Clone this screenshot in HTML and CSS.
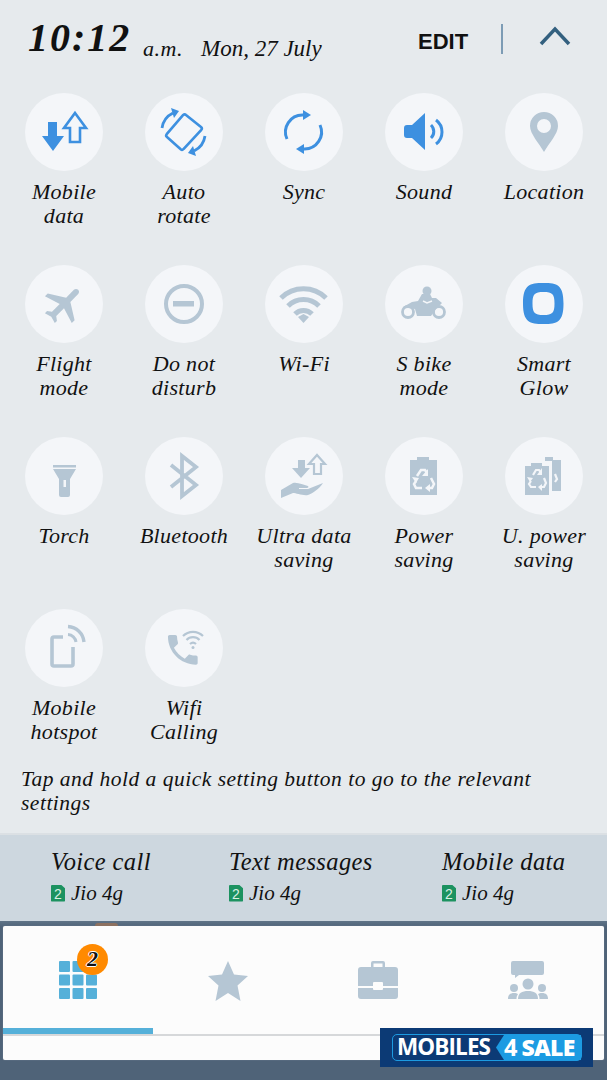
FILE: index.html
```html
<!DOCTYPE html>
<html lang="en">
<head>
    <meta charset="UTF-8">
    <meta name="viewport" content="width=device-width, initial-scale=1.0">
    <title>Quick settings</title>
    <link rel="stylesheet" href="styles.css">
</head>
<body>
    <div class="panel">
        <header class="top">
            <span class="time">10:12</span>
            <span class="ampm">a.m.</span>
            <span class="date">Mon, 27 July</span>
            <span class="edit">EDIT</span>
            <span class="divider"></span>
            <svg class="chevron" width="32" height="20" viewBox="0 0 32 20"><path d="M2 18 16 3l14 15"/></svg>
        </header>

        <div class="tiles">
            <div class="tile">
                <div class="circle"><svg viewBox="0 0 78 78" class="on">
                    <path d="M23 29h9v14h7L28 58 17 43h6z"/>
                    <path d="M50 20 61 35h-6v14H45V35h-6z" class="line-on" stroke-width="2.6"/>
                </svg></div>
                <p>Mobile<br>data</p>
            </div>
            <div class="tile">
                <div class="circle"><svg viewBox="0 0 78 78" class="on">
                    <path d="M41 22 56 34a2 2 0 0 1 .3 2.8L38.500 56a2 2 0 0 1-2.800.3L22 44a2 2 0 0 1-.3-2.800L38.200 22a2 2 0 0 1 2.800 0z" class="line-on" stroke-width="2.6"/>
                    <path d="M17 35A20 20 0 0 1 28 20" class="line-on" stroke-width="2.800"/>
                    <path d="m26 15 8 3-5 7z"/>
                    <path d="M60 43A20 20 0 0 1 49 58" class="line-on" stroke-width="2.800"/>
                    <path d="m51 63-8-3 5-7z"/>
                </svg></div>
                <p>Auto<br>rotate</p>
            </div>
            <div class="tile">
                <div class="circle"><svg viewBox="0 0 78 78" class="on">
                    <path d="M22 46A17 17 0 0 1 38 22" class="line-on" stroke-width="3"/>
                    <path d="M38 17v10l8-5z"/>
                    <path d="M55 32A17 17 0 0 1 39 56" class="line-on" stroke-width="3"/>
                    <path d="M39 61V51l-8 5z"/>
                </svg></div>
                <p>Sync</p>
            </div>
            <div class="tile">
                <div class="circle"><svg viewBox="0 0 78 78" class="on">
                    <path d="M22 32h5l13-12v37L27 45h-5a3 3 0 0 1-3-3v-7a3 3 0 0 1 3-3z"/>
                    <path d="M46 32a9 9 0 0 1 0 13" class="line-on" stroke-width="3"/>
                    <path d="M51 27a15 15 0 0 1 0 24" class="line-on" stroke-width="3"/>
                </svg></div>
                <p>Sound</p>
            </div>
            <div class="tile">
                <div class="circle"><svg viewBox="0 0 78 78" class="off">
                    <path fill-rule="evenodd" d="M39 19a14 14 0 0 1 14 14c0 8-9 17-14 26-5-9-14-18-14-26a14 14 0 0 1 14-14zm0 7a7 7 0 1 0 0 14 7 7 0 0 0 0-14z"/>
                </svg></div>
                <p>Location</p>
            </div>

            <div class="tile">
                <div class="circle"><svg viewBox="0 0 78 78" class="off">
                    <path transform="translate(39 39) rotate(45) scale(2) translate(-11.500 -12)" d="M21 16v-2l-8-5V3.500c0-.83-.67-1.500-1.500-1.500S10 2.670 10 3.500V9l-8 5v2l8-2.500V19l-2 1.500V22l3.500-1 3.500 1v-1.500L13 19v-5.500l8 2.500z"/>
                </svg></div>
                <p>Flight<br>mode</p>
            </div>
            <div class="tile">
                <div class="circle"><svg viewBox="0 0 78 78" class="off">
                    <circle cx="39" cy="39" r="18" class="line-off" stroke-width="4"/>
                    <rect x="28" y="36" width="21" height="5.500"/>
                </svg></div>
                <p>Do not<br>disturb</p>
            </div>
            <div class="tile">
                <div class="circle"><svg viewBox="0 0 78 78" class="off">
                    <path d="M16 33a32 32 0 0 1 45 0" class="line-off" stroke-width="5"/>
                    <path d="M23 41a22 22 0 0 1 31 0" class="line-off" stroke-width="5"/>
                    <path d="M30 49a12 12 0 0 1 17 0" class="line-off" stroke-width="5"/>
                    <path d="m33 52 5.500-3 5.500 3-5.500 6z"/>
                </svg></div>
                <p>Wi-Fi</p>
            </div>
            <div class="tile">
                <div class="circle"><svg viewBox="0 0 78 78" class="off">
                    <circle cx="23" cy="47" r="5.500" class="line-off" stroke-width="2.800"/>
                    <circle cx="54" cy="47" r="5.500" class="line-off" stroke-width="2.800"/>
                    <circle cx="42" cy="26" r="4.500"/>
                    <path d="M18 42l9-5 6-1 4-7h8l2 4h4l6 5-6 6-5 7H32l-2-7z"/>
                    <path d="M38 36l4 2 5-2" class="recycle-line"/>
                </svg></div>
                <p>S bike<br>mode</p>
            </div>
            <div class="tile">
                <div class="circle"><svg viewBox="0 0 78 78" class="on">
                    <path fill-rule="evenodd" d="M38.500 18c14 0 20 2 20 20.500s-6 20.500-20 20.500-20.500-2-20.500-20.500S24.500 18 38.500 18zm0 9c-9 0-11 2-11 11.500S29.500 50 38.500 50s11-2 11-11.500S47.500 27 38.500 27z"/>
                </svg></div>
                <p>Smart<br>Glow</p>
            </div>

            <div class="tile">
                <div class="circle"><svg viewBox="0 0 78 78" class="off">
                    <rect x="28" y="28" width="23" height="2.500"/>
                    <path fill-rule="evenodd" d="M28 32h23l-6 10v16a2 2 0 0 1-2 2h-7a2 2 0 0 1-2-2V42zm10.500 11v7h2.500v-7z"/>
                </svg></div>
                <p>Torch</p>
            </div>
            <div class="tile">
                <div class="circle"><svg viewBox="0 0 78 78" class="off">
                    <path d="M26 28l25 20-14 11V19l14 11-25 20" class="line-off" stroke-width="3.800"/>
                </svg></div>
                <p>Bluetooth</p>
            </div>
            <div class="tile">
                <div class="circle"><svg viewBox="0 0 78 78" class="off">
                    <path d="M33 23h7v8h5l-9 10-9-10h6z"/>
                    <path d="m52 18 8 9h-4v10h-7V27h-5z" class="line-off" stroke-width="2.200"/>
                    <path d="M16 53l12-7c5-1 10 2 15 3 1 1 0 2-1 2h-8v1h9l15-6c-4 6-10 10-15 12-5 1-12-2-15-2l-12 5z"/>
                </svg></div>
                <p>Ultra data<br>saving</p>
            </div>
            <div class="tile">
                <div class="circle"><svg viewBox="0 0 78 78" class="off">
                    <path d="M32 20h12v3h8v35H25V23h7z"/>
                    <g class="recycle">
                        <path d="M32 39l4-6h4l2 3"/>
                        <path d="M46 41l3 6-2 4h-5"/>
                        <path d="M37 51h-6l-2-4 2-3"/>
                        <path d="M43 32v7h-6z" class="head"/>
                        <path d="M40 51l5-4v8z" class="head"/>
                        <path d="M27 40l7 1-3 5z" class="head"/>
                    </g>
                </svg></div>
                <p>Power<br>saving</p>
            </div>
            <div class="tile">
                <div class="circle"><svg viewBox="0 0 78 78" class="off">
                    <path d="M40 20h8v3h8v31h-9V24h-7z"/>
                    <path d="M26 26h11v3h7v29H20V29h6z"/>
                    <g class="recycle small">
                        <path d="M28 38l3-5h3l2 3"/>
                        <path d="M39 41l2 5-2 4h-4"/>
                        <path d="M31 50h-5l-2-3 2-3"/>
                        <path d="M37 31v7h-5z" class="head"/>
                        <path d="M33 50l4-3v7z" class="head"/>
                        <path d="M22 40l6 1-3 4z" class="head"/>
                        <path d="M50 37l2 5-2 3"/>
                    </g>
                </svg></div>
                <p>U. power<br>saving</p>
            </div>

            <div class="tile">
                <div class="circle"><svg viewBox="0 0 78 78" class="off">
                    <path d="M38 28H29a2 2 0 0 0-2 2v25a2 2 0 0 0 2 2h17a2 2 0 0 0 2-2V38" class="line-off" stroke-width="3.600"/>
                    <path d="M43 17.500A17 17 0 0 1 59 33" class="line-off" stroke-width="3.400"/>
                    <path d="M43 25.500A8.500 8.500 0 0 1 51 33" class="line-off" stroke-width="3"/>
                </svg></div>
                <p>Mobile<br>hotspot</p>
            </div>
            <div class="tile">
                <div class="circle"><svg viewBox="0 0 78 78" class="off">
                    <path transform="translate(18 21) scale(1.650)" d="M6.620 10.790c1.440 2.830 3.760 5.140 6.590 6.590l2.200-2.200c.27-.27.67-.36 1.020-.24 1.120.37 2.330.57 3.570.57.550 0 1 .45 1 1V20c0 .55-.45 1-1 1-9.390 0-17-7.610-17-17 0-.55.45-1 1-1h3.500c.55 0 1 .45 1 1 0 1.250.2 2.450.57 3.570.11.35.03.74-.25 1.020l-2.200 2.200z"/>
                    <path d="M38 27a14 14 0 0 1 20 0" class="line-off" stroke-width="2.200"/>
                    <path d="M41.500 31a9 9 0 0 1 13 0" class="line-off" stroke-width="2.200"/>
                    <path d="M45 35a4.500 4.500 0 0 1 6 0" class="line-off" stroke-width="2.200"/>
                    <circle cx="48" cy="38.500" r="1.500"/>
                </svg></div>
                <p>Wifi<br>Calling</p>
            </div>
        </div>

        <p class="hint">Tap and hold a quick setting button to go to the relevant settings</p>
    </div>

    <div class="sims">
        <div class="sim">
            <div class="sim-title">Voice call</div>
            <div class="sim-row"><span class="chip">2</span>Jio 4g</div>
        </div>
        <div class="sim">
            <div class="sim-title">Text messages</div>
            <div class="sim-row"><span class="chip">2</span>Jio 4g</div>
        </div>
        <div class="sim">
            <div class="sim-title">Mobile data</div>
            <div class="sim-row"><span class="chip">2</span>Jio 4g</div>
        </div>
    </div>

    <div class="bottom">
        <span class="peek"></span>
        <div class="card">
            <div class="tabs">
                <div class="tab">
                    <svg width="38" height="38" viewBox="0 0 38 38" class="apps">
                        <rect x="0" y="0" width="11" height="11" rx="1"/><rect x="13.500" y="0" width="11" height="11" rx="1"/><rect x="27" y="0" width="11" height="11" rx="1"/>
                        <rect x="0" y="13.500" width="11" height="11" rx="1"/><rect x="13.500" y="13.500" width="11" height="11" rx="1"/><rect x="27" y="13.500" width="11" height="11" rx="1"/>
                        <rect x="0" y="27" width="11" height="11" rx="1"/><rect x="13.500" y="27" width="11" height="11" rx="1"/><rect x="27" y="27" width="11" height="11" rx="1"/>
                    </svg>
                    <span class="badge">2</span>
                </div>
                <div class="tab">
                    <svg width="40" height="40" viewBox="0 0 40 40" class="off"><path d="M20 0l6 13.500 14 1.500-10.500 9.500 3 15.500L20 32l-12.500 8 3-15.500L0 15l14-1.500z"/></svg>
                </div>
                <div class="tab">
                    <svg width="40" height="38" viewBox="0 0 40 38" class="off">
                        <path d="M13 6V2a2 2 0 0 1 2-2h10a2 2 0 0 1 2 2v4h-2.500V2.500h-9V6z"/>
                        <path d="M3 6h34a3 3 0 0 1 3 3v16H25v-3a1 1 0 0 0-1-1h-8a1 1 0 0 0-1 1v3H0V9a3 3 0 0 1 3-3z"/>
                        <path d="M0 27h15v1a1 1 0 0 0 1 1h8a1 1 0 0 0 1-1v-1h15v8a3 3 0 0 1-3 3H3a3 3 0 0 1-3-3z"/>
                    </svg>
                </div>
                <div class="tab">
                    <svg width="40" height="38" viewBox="0 0 40 38" class="off">
                        <path d="M5 0h29a2 2 0 0 1 2 2v10a2 2 0 0 1-2 2H11l-4 3v-3H5a2 2 0 0 1-2-2V2a2 2 0 0 1 2-2z"/>
                        <circle cx="20" cy="23" r="5.500"/><path d="M10 38c0-6 4-8 10-8s10 2 10 8z"/>
                        <circle cx="6" cy="27" r="4"/><path d="M0 38c0-4 2-6 6-6 2 0 3 .5 4 1-1 1.500-1.500 3-1.500 5z"/>
                        <circle cx="34" cy="27" r="4"/><path d="M40 38c0-4-2-6-6-6-2 0-3 .5-4 1 1 1.500 1.500 3 1.500 5z"/>
                    </svg>
                </div>
            </div>
            <div class="indicator"><span></span></div>
        </div>
        <div class="watermark">
            <div class="wm-pill">
                <span class="wm-left">MOBILES</span>
                <span class="wm-right">4<b>SALE</b></span>
            </div>
        </div>
    </div>
</body>
</html>
```

FILE: styles.css
```css
body {
    margin: 0;
    width: 607px;
    height: 1080px;
    overflow: hidden;
    background-color: #4f6378;
    font-family: "Liberation Serif", cursive;
    font-style: italic;
    color: #111;
}

p {
    margin: 0;
}

.panel {
    height: 833px;
    background-color: #e6eaed;
    border-bottom: 2px solid #dbe0e4;
    padding-left: 4px;
}

/* header */
.top {
    height: 93px;
    box-sizing: border-box;
    display: flex;
    align-items: flex-start;
    padding-left: 24px;
}

.time {
    font-size: 40px;
    font-weight: 700;
    line-height: 40px;
    letter-spacing: 2px;
    width: 115px;
    margin-top: 18px;
}

.ampm {
    font-size: 22px;
    line-height: 24px;
    letter-spacing: .5px;
    width: 58px;
    margin-top: 37px;
}

.date {
    font-size: 23px;
    line-height: 24px;
    width: 217px;
    margin-top: 37px;
}

.edit {
    font: 700 22px/24px "Liberation Sans", sans-serif;
    width: 83px;
    margin-top: 30px;
}

.divider {
    width: 2px;
    height: 30px;
    background-color: #7d9cb5;
    margin-top: 24px;
}

.chevron {
    margin: 26px 0 0 36px;
    fill: none;
    stroke: #33607f;
    stroke-width: 3.5;
}

/* quick setting tiles */
.tiles {
    display: grid;
    grid-template-columns: repeat(5, 120px);
    grid-auto-rows: 135px;
    row-gap: 37px;
}

.tile {
    display: flex;
    flex-direction: column;
    align-items: center;
}

.circle {
    width: 78px;
    height: 78px;
    border-radius: 50%;
    background-color: #f4f6f9;
}

.circle svg {
    display: block;
    width: 78px;
    height: 78px;
}

.tile p {
    margin-top: 9px;
    font-size: 22px;
    line-height: 24px;
    letter-spacing: .3px;
    text-align: center;
    white-space: nowrap;
}

.on {
    fill: #3d90e0;
}

.off {
    fill: #b5c6d4;
}

.line-on,
.line-off {
    fill: none;
}

.line-on {
    stroke: #3d90e0;
}

.line-off {
    stroke: #b5c6d4;
}

.recycle path {
    fill: none;
    stroke: #f4f6f9;
    stroke-width: 2.500;
}

.recycle.small path {
    stroke-width: 2.200;
}

.recycle .head,
.recycle.small .head {
    fill: #f4f6f9;
    stroke: none;
}

.recycle-line {
    fill: none;
    stroke: #f4f6f9;
    stroke-width: 1.500;
}

.hint {
    margin: 23px 0 0 17px;
    width: 530px;
    font-size: 21.5px;
    line-height: 24px;
    letter-spacing: .5px;
}

/* sim row */
.sims {
    height: 86px;
    box-sizing: border-box;
    background-color: #cdd7df;
    display: grid;
    grid-template-columns: 178px 213px 1fr;
    padding: 13px 0 0 51px;
}

.sim-title {
    font-size: 24.5px;
    line-height: 27px;
    letter-spacing: .4px;
}

.sim-row {
    display: flex;
    align-items: center;
    gap: 6px;
    margin-top: 6px;
    font-size: 21px;
    line-height: 24px;
}

.chip {
    width: 14px;
    height: 17px;
    background-color: #1c9260;
    color: #d8f0e4;
    border-radius: 1px;
    clip-path: polygon(0 0, 70% 0, 100% 22%, 100% 100%, 0 100%);
    font: 14px/18px "Liberation Sans", sans-serif;
    text-align: center;
}

/* bottom dock */
.bottom {
    position: relative;
    padding: 5px 3px 0;
    background: linear-gradient(#5f7487, #4f6378 6px);
    height: 159px;
    box-sizing: border-box;
}

.peek {
    position: absolute;
    left: 95px;
    top: 2px;
    width: 23px;
    height: 3px;
    border-radius: 12px 12px 0 0;
    background-color: #8d7160;
}

.card {
    height: 134px;
    background-color: #fcfcfc;
    border-radius: 2px;
    box-shadow: 0 0 1px #9aa7b3;
}

.tabs {
    height: 102px;
    display: grid;
    grid-template-columns: repeat(4, 150px);
}

.tab {
    position: relative;
    display: flex;
    justify-content: center;
    padding-top: 35px;
    box-sizing: border-box;
}

.tab svg {
    display: block;
}

.apps {
    fill: #55b0d9;
}

.badge {
    position: absolute;
    left: 74px;
    top: 18px;
    width: 31px;
    height: 31px;
    border-radius: 50%;
    background-color: #ff8a00;
    color: #111;
    font: italic bold 22px/30px "Liberation Serif", cursive;
    text-align: center;
    text-shadow: 1px 0 #fff, -1px 0 #fff, 0 1px #fff, 0 -1px #fff;
}

.indicator {
    height: 8px;
    box-sizing: border-box;
    border-bottom: 2px solid #d6d8da;
}

.indicator span {
    display: block;
    width: 150px;
    height: 6px;
    background-color: #55b0d9;
}

/* site watermark */
.watermark {
    position: absolute;
    left: 380px;
    top: 107px;
    width: 213px;
    height: 39px;
    box-sizing: border-box;
    padding: 6px 11px 6px 12px;
    background-color: #0c3a75;
    font-style: normal;
    font-family: "Open Sans", sans-serif;
    font-weight: 700;
    color: #fff;
}

.wm-pill {
    display: flex;
    height: 27px;
    box-sizing: border-box;
    border: 1.500px solid #1c9be2;
    border-radius: 5px;
    line-height: 24px;
    font-size: 22.5px;
}

.wm-left {
    width: 103px;
    padding-left: 4px;
    box-sizing: border-box;
    letter-spacing: -.9px;
}

.wm-right {
    flex: 1;
    background-color: #1c9be2;
    clip-path: polygon(8px 0, 100% 0, 100% 100%, 8px 100%, 0 50%);
    padding-left: 8px;
    font-size: 23.5px;
}

.wm-right b {
    margin-left: 4px;
    font-size: 23px;
    letter-spacing: -.7px;
}
```
